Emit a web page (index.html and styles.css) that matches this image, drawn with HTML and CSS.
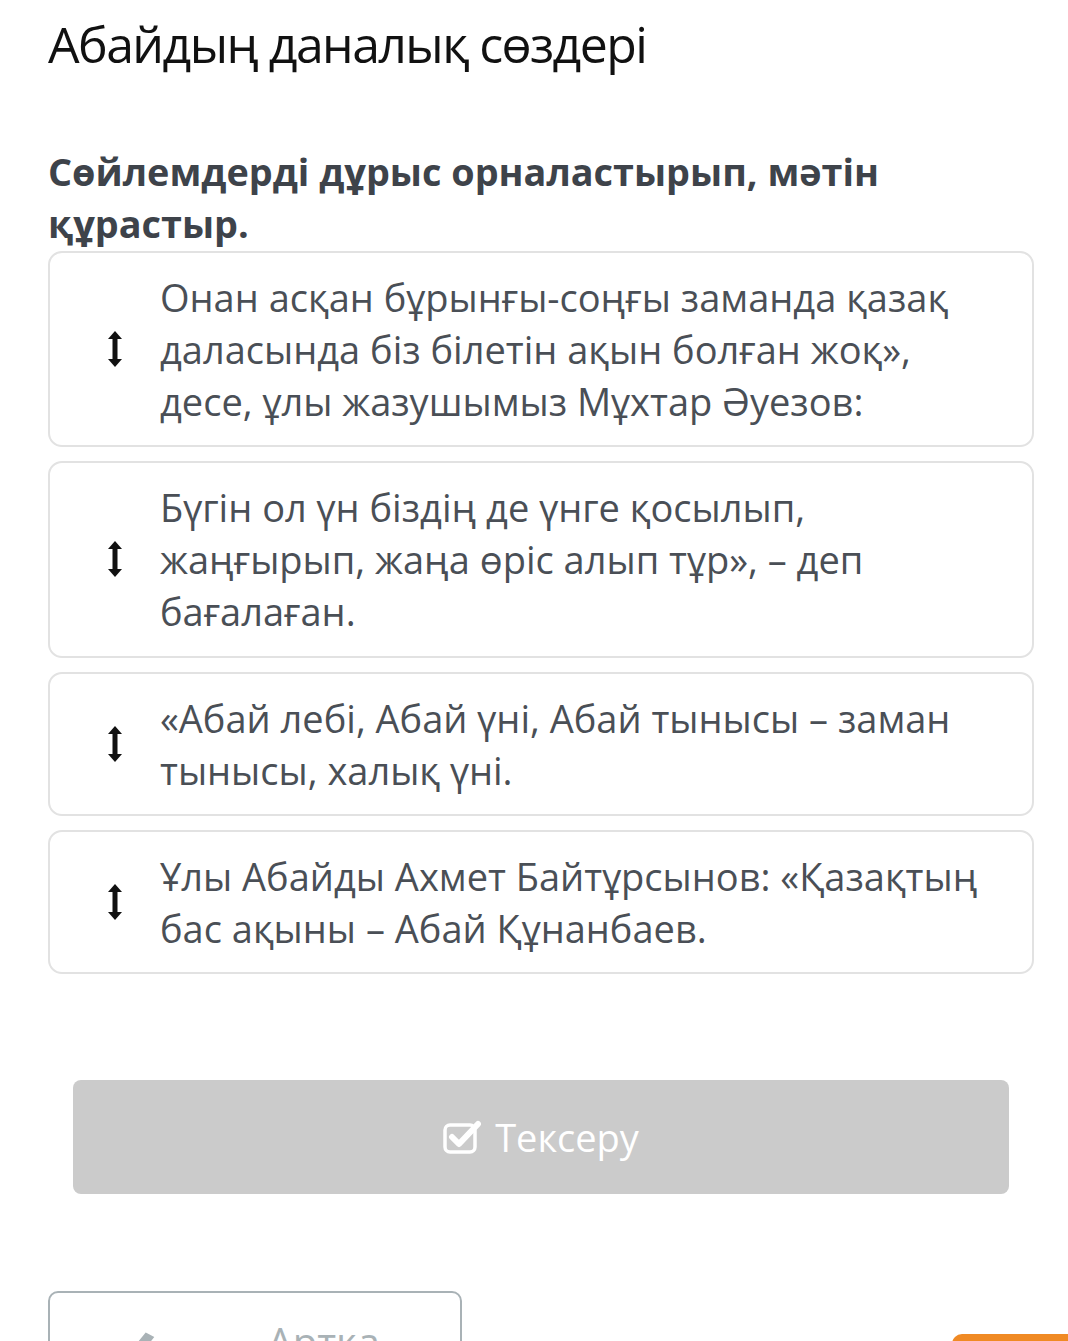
FILE: index.html
```html
<!DOCTYPE html>
<html lang="kk">
<head>
<meta charset="utf-8">
<link rel="stylesheet" href="styles.css">
</head>
<body>
<div class="page">
  <h1 class="title">Абайдың даналық сөздері</h1>
  <p class="prompt">Сөйлемдерді дұрыс орналастырып, мәтін құрастыр.</p>
  <div class="list">
    <div class="card">
      <span class="handle"><svg width="16" height="38" viewBox="0 0 16 38"><path d="M8 1 L15 9 H10.5 V29 H15 L8 37 L1 29 H5.5 V9 H1 Z" fill="#111"/></svg></span>
      <p class="text">Онан асқан бұрынғы-соңғы заманда қазақ даласында біз білетін ақын болған жоқ», десе, ұлы жазушымыз Мұхтар Әуезов:</p>
    </div>
    <div class="card">
      <span class="handle"><svg width="16" height="38" viewBox="0 0 16 38"><path d="M8 1 L15 9 H10.5 V29 H15 L8 37 L1 29 H5.5 V9 H1 Z" fill="#111"/></svg></span>
      <p class="text">Бүгін ол үн біздің де үнге қосылып, жаңғырып, жаңа өріс алып тұр», – деп бағалаған.</p>
    </div>
    <div class="card">
      <span class="handle"><svg width="16" height="38" viewBox="0 0 16 38"><path d="M8 1 L15 9 H10.5 V29 H15 L8 37 L1 29 H5.5 V9 H1 Z" fill="#111"/></svg></span>
      <p class="text">«Абай лебі, Абай үні, Абай тынысы – заман тынысы, халық үні.</p>
    </div>
    <div class="card">
      <span class="handle"><svg width="16" height="38" viewBox="0 0 16 38"><path d="M8 1 L15 9 H10.5 V29 H15 L8 37 L1 29 H5.5 V9 H1 Z" fill="#111"/></svg></span>
      <p class="text">Ұлы Абайды Ахмет Байтұрсынов: «Қазақтың бас ақыны – Абай Құнанбаев.</p>
    </div>
  </div>
  <div class="check-wrap">
    <button class="check">
      <svg width="38" height="34" viewBox="0 0 38 34"><rect x="2" y="5" width="30" height="27" rx="5" fill="none" stroke="#fff" stroke-width="3.5"/><path d="M9 17 L16 24 L35 4" fill="none" stroke="#fff" stroke-width="6" stroke-linecap="round" stroke-linejoin="round"/></svg>
      <span>Тексеру</span>
    </button>
  </div>
  <div class="nav">
    <button class="back"><span class="chev">‹</span><span>Артқа</span></button>
    <button class="next"></button>
  </div>
</div>
</body>
</html>
```
FILE: styles.css
```css
* { box-sizing: border-box; }
html, body { margin: 0; padding: 0; background: #fff; }
body { font-family: "Open Sans", "Noto Sans", sans-serif; overflow: hidden; height: 1341px; }
.page { padding: 0 34px 0 48px; }
.title {
  margin: 0;
  padding-top: 12px;
  font-size: 50px;
  font-weight: 400;
  line-height: 64px;
  color: #111;
  letter-spacing: -1.6px;
}
.prompt {
  margin: 70px 0 0;
  font-size: 37.8px;
  font-weight: 700;
  line-height: 52px;
  color: #3e434a;
  width: 900px;
}
.list { display: flex; flex-direction: column; gap: 14px; margin-top: 1px; }
.card {
  display: flex;
  align-items: center;
  border: 2px solid #e2e2e2;
  border-radius: 14px;
  padding: 18px 20px 18px 0;
  min-height: 143px;
}
.card:nth-child(2) { padding-bottom: 19px; }
.handle { width: 110px; display: flex; justify-content: flex-end; padding-right: 37px; }
.text {
  margin: 0;
  font-size: 38px;
  line-height: 52px;
  color: #4a4f56;
  flex: 1;
}
.check-wrap { padding: 106px 25px 0 25px; }
.check {
  width: 100%;
  height: 114px;
  border: 0;
  border-radius: 8px;
  background: #cbcbcb;
  display: flex;
  align-items: center;
  justify-content: center;
  gap: 14px;
  color: #fff;
  font-family: "Open Sans", sans-serif;
  font-size: 38px;
  padding: 0;
}
.nav { display: flex; justify-content: space-between; align-items: flex-start; margin-top: 97px; margin-right: -34px; }
.back {
  width: 414px;
  height: 100px;
  border: 2px solid #a9b2b6;
  border-radius: 10px;
  background: #fff;
  display: flex;
  align-items: center;
  gap: 110px;
  padding: 0 0 0 78px;
  font-family: "Open Sans", sans-serif;
  font-size: 40px;
  color: #a9b2b6;
}
.chev { font-size: 80px; font-weight: 700; }
.next {
  margin-top: 43px;
  width: 116px;
  height: 60px;
  border: 0;
  border-radius: 10px 0 0 0;
  background: #f08a24;
}
```
